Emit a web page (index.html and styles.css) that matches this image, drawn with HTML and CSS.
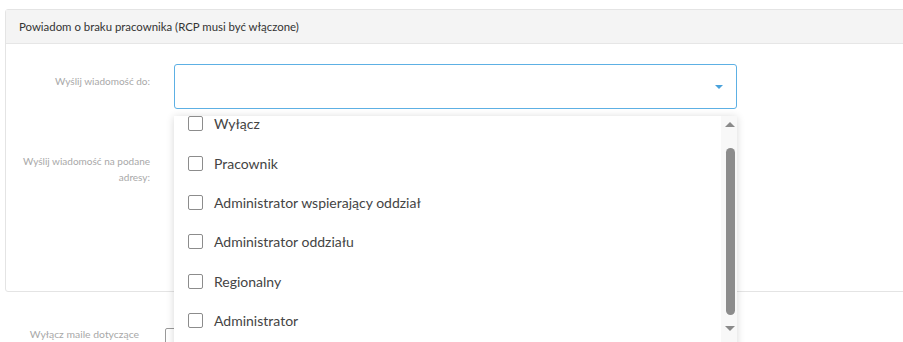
FILE: index.html
```html
<!DOCTYPE html>
<html lang="pl">
<head>
<meta charset="utf-8">
<link rel="stylesheet" href="styles.css">
</head>
<body>
<div class="page">
  <div class="panel">
    <div class="panel-header">Powiadom o braku pracownika (RCP musi być włączone)</div>
    <div class="panel-body">
      <div class="row row-select">
        <label class="label">Wyślij wiadomość do:</label>
        <div class="field">
          <div class="select">
            <span class="caret"></span>
          </div>
          <div class="dropdown">
            <div class="options">
              <ul class="list">
                <li class="option"><span class="check"></span>Wyłącz</li>
                <li class="option"><span class="check"></span>Pracownik</li>
                <li class="option"><span class="check"></span>Administrator wspierający oddział</li>
                <li class="option"><span class="check"></span>Administrator oddziału</li>
                <li class="option"><span class="check"></span>Regionalny</li>
                <li class="option"><span class="check"></span>Administrator</li>
              </ul>
            </div>
            <div class="scrollbar">
              <span class="arrow arrow-up"></span>
              <span class="thumb"></span>
              <span class="arrow arrow-down"></span>
            </div>
          </div>
        </div>
      </div>
      <div class="row row-text">
        <label class="label">Wyślij wiadomość na podane adresy:</label>
        <div class="field">
          <div class="textarea"></div>
        </div>
      </div>
    </div>
  </div>
  <div class="row row-bottom">
    <label class="label label-bottom">Wyłącz maile dotyczące</label>
    <span class="check check-bottom"></span>
  </div>
</div>
</body>
</html>
```

FILE: styles.css
```css
html, body {
  margin: 0;
  padding: 0;
  background: #ffffff;
  overflow: hidden;
}
body {
  font-family: Lato, "Open Sans", sans-serif;
  color: #333333;
  width: 903px;
  height: 342px;
}
.page {
  padding: 9px 0 0 5px;
}
.panel {
  width: 920px;
  border: 1px solid #e4e4e4;
  border-radius: 3px 0 0 3px;
  background: #ffffff;
}
.panel-header {
  height: 33px;
  line-height: 33px;
  background: #f4f4f4;
  border-bottom: 1px solid #e6e6e6;
  padding-left: 13px;
  font-size: 11.4px;
  color: #333333;
}
.panel-body {
  padding: 20px 0 0 0;
  height: 227px;
}
.row {
  display: flex;
  align-items: flex-start;
}
.label {
  width: 144px;
  flex: none;
  text-align: right;
  font-size: 10px;
  color: #a8a8a8;
  margin-right: 24px;
}
.row-select .label {
  line-height: 45px;
  margin-top: -5px;
}
.field {
  position: relative;
  width: 563px;
}
.select {
  height: 43px;
  border: 1px solid #5db0e4;
  border-radius: 3px;
  background: #ffffff;
  display: flex;
  align-items: center;
  justify-content: flex-end;
  padding-right: 13px;
}
.caret {
  width: 0;
  height: 0;
  border-left: 4px solid transparent;
  border-right: 4px solid transparent;
  border-top: 4px solid #4aa2db;
  margin-top: 1px;
}
.dropdown {
  position: absolute;
  left: 0;
  top: 52px;
  width: 563px;
  height: 240px;
  background: #ffffff;
  box-shadow: 0 1px 8px rgba(0, 0, 0, 0.16);
  display: flex;
  z-index: 10;
}
.options {
  flex: 1;
  overflow: hidden;
}
.list {
  list-style: none;
  margin: -12px 0 0 0;
  padding: 0;
}
.option {
  height: 39.4px;
  display: flex;
  align-items: center;
  padding-left: 14px;
  font-size: 14px;
  color: #444444;
}
.check {
  width: 13px;
  height: 13px;
  border: 1px solid #8c8c8c;
  border-radius: 2px;
  background: #ffffff;
  margin-right: 11px;
  flex: none;
}
.scrollbar {
  width: 16px;
  background: #f8f8f8;
  display: flex;
  flex-direction: column;
  align-items: center;
  padding-top: 6px;
}
.arrow {
  width: 0;
  height: 0;
  border-left: 5px solid transparent;
  border-right: 5px solid transparent;
}
.arrow-up {
  border-bottom: 5px solid #8a8a8a;
  margin-left: 2px;
}
.arrow-down {
  border-top: 5px solid #8a8a8a;
  margin-top: 11px;
  margin-left: 2px;
}
.thumb {
  width: 9px;
  height: 167px;
  margin-top: 21px;
  margin-left: 3px;
  background: #8c8c8c;
  border-radius: 5px;
}
.row-text {
  margin-top: 44px;
}
.row-text .label {
  line-height: 16px;
}
.textarea {
  height: 100px;
}
.row-bottom {
  margin-top: 32px;
  align-items: center;
}
.label-bottom {
  width: 134px;
  margin-right: 26px;
  line-height: 16px;
  font-size: 10.4px;
}
.check-bottom {
  width: 14px;
  height: 14px;
  border-color: #999999;
  margin-top: 4px;
}
```
